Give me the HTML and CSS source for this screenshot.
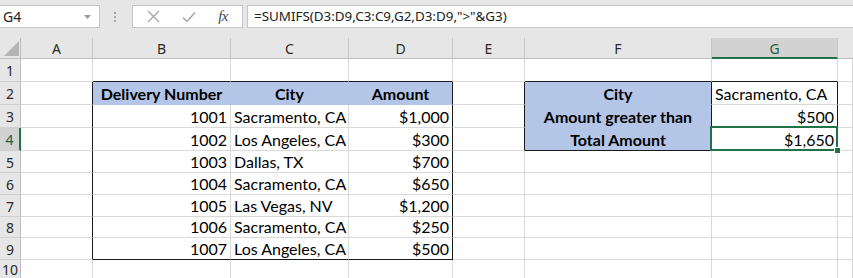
FILE: index.html
```html
<!DOCTYPE html>
<html>
<head>
<meta charset="utf-8">
<link rel="stylesheet" href="styles.css">
</head>
<body>
<div class="app">
  <div class="fbar">
    <div class="namebox"><span class="nb-text">G4</span><svg class="nb-arrow" width="7" height="4" viewBox="0 0 7 4"><path d="M0 0 H7 L3.5 4 Z" fill="#9a9a9a"/></svg></div>
    <div class="grip"><span></span><span></span><span></span></div>
    <div class="btns">
      <svg class="ico" width="13" height="13" viewBox="0 0 13 13"><path d="M1 1 L12 12 M12 1 L1 12" stroke="#a6a6a6" stroke-width="1.3" fill="none"/></svg>
      <svg class="ico" width="14" height="12" viewBox="0 0 14 12"><path d="M1 6.5 L5 10.5 L13 1.5" stroke="#a6a6a6" stroke-width="1.5" fill="none"/></svg>
      <span class="fx">fx</span>
    </div>
    <div class="formula">=SUMIFS(D3:D9,C3:C9,G2,D3:D9,"&gt;"&amp;G3)</div>
  </div>
  <div class="sheet">
    <div class="corner"><span class="tri"></span></div>
    <div class="ch">A</div><div class="ch">B</div><div class="ch">C</div><div class="ch">D</div><div class="ch">E</div><div class="ch">F</div><div class="ch sel-col">G</div><div class="ch last"></div>

    <div class="rh">1</div>
    <div class="c"></div><div class="c bb"></div><div class="c bb"></div><div class="c bb"></div><div class="c"></div><div class="c bb"></div><div class="c bb"></div><div class="c"></div>

    <div class="rh">2</div>
    <div class="c br"></div>
    <div class="c fill m b">Delivery Number</div>
    <div class="c fill m b">City</div>
    <div class="c fill m b br">Amount</div>
    <div class="c br"></div>
    <div class="c fill m b br">City</div>
    <div class="c br">Sacramento, CA</div>
    <div class="c"></div>

    <div class="rh">3</div>
    <div class="c br"></div>
    <div class="c r">1001</div><div class="c">Sacramento, CA</div><div class="c r br">$1,000</div>
    <div class="c br"></div>
    <div class="c fill m b br">Amount greater than</div>
    <div class="c r br">$500</div>
    <div class="c"></div>

    <div class="rh sel-row">4</div>
    <div class="c br"></div>
    <div class="c r">1002</div><div class="c">Los Angeles, CA</div><div class="c r br">$300</div>
    <div class="c br"></div>
    <div class="c fill m b br bb">Total Amount</div>
    <div class="c r br bb active">$1,650</div>
    <div class="c"></div>

    <div class="rh">5</div>
    <div class="c br"></div>
    <div class="c r">1003</div><div class="c">Dallas, TX</div><div class="c r br">$700</div>
    <div class="c"></div><div class="c"></div><div class="c"></div><div class="c"></div>

    <div class="rh">6</div>
    <div class="c br"></div>
    <div class="c r">1004</div><div class="c">Sacramento, CA</div><div class="c r br">$650</div>
    <div class="c"></div><div class="c"></div><div class="c"></div><div class="c"></div>

    <div class="rh">7</div>
    <div class="c br"></div>
    <div class="c r">1005</div><div class="c">Las Vegas, NV</div><div class="c r br">$1,200</div>
    <div class="c"></div><div class="c"></div><div class="c"></div><div class="c"></div>

    <div class="rh">8</div>
    <div class="c br"></div>
    <div class="c r">1006</div><div class="c">Sacramento, CA</div><div class="c r br">$250</div>
    <div class="c"></div><div class="c"></div><div class="c"></div><div class="c"></div>

    <div class="rh">9</div>
    <div class="c br"></div>
    <div class="c r bb">1007</div><div class="c bb">Los Angeles, CA</div><div class="c r br bb">$500</div>
    <div class="c"></div><div class="c"></div><div class="c"></div><div class="c"></div>

    <div class="rh top">10</div>
    <div class="c"></div><div class="c"></div><div class="c"></div><div class="c"></div><div class="c"></div><div class="c"></div><div class="c"></div><div class="c"></div>
  </div>
</div>
</body>
</html>
```
FILE: styles.css
```css
html, body {
  margin: 0;
  padding: 0;
  background: #ffffff;
}

.app {
  width: 853px;
  height: 278px;
  overflow: hidden;
  background: #e6e6e6;
  font-family: "Noto Sans", "DejaVu Sans", sans-serif;
}

/* ---------- formula bar ---------- */
.fbar {
  display: flex;
  align-items: flex-start;
  height: 38px;
  padding-top: 5px;
  box-sizing: border-box;
}

.namebox {
  width: 100px;
  height: 23px;
  box-sizing: border-box;
  background: #fff;
  border: 1px solid #c6c6c6;
  border-left: none;
  display: flex;
  align-items: center;
  justify-content: space-between;
  padding: 0 8px 0 3px;
  font-size: 14px;
  color: #222;
}

.nb-arrow {
  margin-top: 1px;
}

.grip {
  width: 32px;
  height: 23px;
  display: flex;
  flex-direction: column;
  align-items: center;
  justify-content: center;
  gap: 2px;
  padding-right: 2px;
  box-sizing: border-box;
}

.grip span {
  width: 2px;
  height: 2px;
  background: #a8a8a8;
}

.btns {
  width: 111px;
  height: 23px;
  box-sizing: border-box;
  background: #fff;
  border: 1px solid #c6c6c6;
  display: flex;
  align-items: center;
  padding: 0 14px 0 14px;
  justify-content: space-between;
}

.fx {
  font-family: "Liberation Serif", "DejaVu Serif", serif;
  font-style: italic;
  font-size: 15px;
  color: #444;
  letter-spacing: -0.5px;
}

.formula {
  flex: 1;
  margin-left: 4px;
  height: 23px;
  box-sizing: border-box;
  background: #fff;
  border: 1px solid #c6c6c6;
  border-right: none;
  padding: 0 0 0 6px;
  font-size: 13.4px;
  line-height: 21px;
  color: #222;
  white-space: nowrap;
}

/* ---------- sheet grid ---------- */
.sheet {
  display: grid;
  grid-template-columns: 21px 72px 138px 118px 104px 72px 187px 126px 1fr;
  grid-template-rows: 21px 23px 23px 23px 23px 22px 22px 22px 21px 22px 40px;
  background: #fff;
}

.corner {
  background: #e6e6e6;
  border-right: 1px solid #bfbfbf;
  border-bottom: 1px solid #bfbfbf;
  box-sizing: border-box;
  display: flex;
  align-items: flex-end;
  justify-content: flex-end;
  padding: 0 1px 2px 0;
}

.tri {
  width: 0;
  height: 0;
  border-left: 15px solid transparent;
  border-bottom: 15px solid #b4b4b4;
}

.ch {
  background: #e6e6e6;
  border-right: 1px solid #c8c8c8;
  border-bottom: 1px solid #bfbfbf;
  box-sizing: border-box;
  display: flex;
  align-items: center;
  justify-content: center;
  font-size: 14px;
  color: #2a2a2a;
  padding-top: 1px;
}

.ch.last {
  border-right: none;
}

.ch.sel-col {
  background: #d2d2d2;
  border-bottom: 2px solid #217346;
  color: #1f5c3c;
}

.rh {
  background: #e6e6e6;
  border-right: 1px solid #bfbfbf;
  border-bottom: 1px solid #d0d0d0;
  box-sizing: border-box;
  display: flex;
  align-items: center;
  justify-content: center;
  font-size: 14px;
  color: #2a2a2a;
  padding-top: 1px;
}

.rh.top {
  align-items: flex-start;
  padding-top: 3px;
  line-height: 14px;
}

.rh.sel-row {
  background: #d2d2d2;
  border-right: 2px solid #217346;
  color: #1f5c3c;
}

.c {
  border-right: 1px solid #d9d9d9;
  border-bottom: 1px solid #d9d9d9;
  box-sizing: border-box;
  display: flex;
  align-items: flex-end;
  padding: 0 3px 0 3px;
  white-space: nowrap;
  overflow: visible;
  font-family: "Lato", "Open Sans", sans-serif;
  font-size: 16px;
  line-height: 20px;
  color: #000;
}

.c.r {
  justify-content: flex-end;
}

.c.m {
  justify-content: center;
}

.c.b {
  font-weight: bold;
}

.c.fill {
  background: #b4c6e7;
  border-right-color: #b4c6e7;
  border-bottom-color: #b4c6e7;
}

.c.br {
  border-right-color: #1a1a1a;
}

.c.bb {
  border-bottom-color: #1a1a1a;
}

.c.active {
  position: relative;
}

.c.active::after {
  content: "";
  position: absolute;
  left: -2px;
  top: -2px;
  right: -1px;
  bottom: -1px;
  border: 2px solid #217346;
  pointer-events: none;
}

.c.active::before {
  content: "";
  position: absolute;
  right: -4px;
  bottom: -4px;
  width: 5px;
  height: 5px;
  background: #217346;
  border: 1px solid #fff;
  z-index: 2;
}
```
